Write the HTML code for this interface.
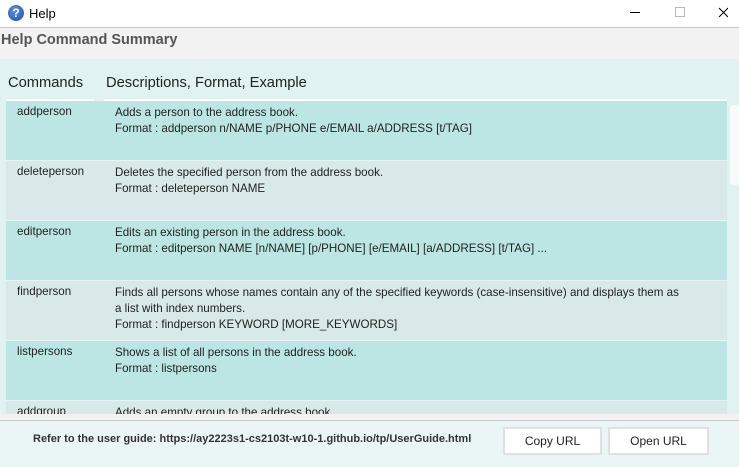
<!DOCTYPE html>
<html><head><style>
*{margin:0;padding:0;box-sizing:border-box}
body{width:739px;height:461px;overflow:hidden;background:#f2f2f2;font-family:"Liberation Sans",sans-serif;position:relative}
.tb{position:absolute;left:0;top:0;width:739px;height:28px;background:#fff;border-bottom:1px solid #c8c8c8}
.tb .ic{position:absolute;left:8px;top:5px;width:16px;height:16px;border-radius:50%;background:radial-gradient(circle at 40% 35%,#5a8fe0,#1f4fb0);color:#fff;font-weight:bold;font-size:12px;text-align:center;line-height:16px}
.tb .t{position:absolute;left:29px;top:6px;font-size:13px;color:#000}
.h{position:absolute;left:1px;top:32px;font-size:14.5px;color:#555;font-weight:bold}
.panel{position:absolute;left:0;top:59px;width:739px;height:355px;background:#e0f2f1;overflow:hidden}
.hd{position:absolute;top:16px;font-size:14.7px;color:#222}
.ul{position:absolute;top:40px;height:2px;background:#fff}
.row{position:absolute;left:6px;width:721px;height:60px;font-size:11.6px;color:#222;border-bottom:1px solid #e6f4f3}
.row .c{position:absolute;left:11px;top:4px}
.row .d{position:absolute;left:109px;top:4px;line-height:16px;width:590px}
.a{background:#bce6e3}.b{background:#d9e8e8}
.sb{position:absolute;left:730px;top:46px;width:9px;height:80px;background:#f8fbfb;border-radius:3px}
.bot{position:absolute;left:0;top:414px;width:739px;height:47px;background:#eaf5f5;border-top:1px solid #c8c8c8;margin-top:6px}
.bot .txt{position:absolute;left:33px;top:12px;font-size:11px;font-weight:bold;color:#333}
.btn{position:absolute;top:6px;height:28px;background:#fff;border:2px solid #e0e0e0;font-size:12px;color:#222;text-align:center;line-height:24px}
</style></head><body>
<div class="tb"><div class="ic">?</div><div class="t">Help</div>
<svg style="position:absolute;left:628px;top:7px" width="100" height="14"><line x1="2" y1="5.5" x2="12" y2="5.5" stroke="#000"/><rect x="47.5" y="0.5" width="9" height="9" fill="none" stroke="#bbb"/><path d="M91 1L100 10M100 1L91 10" stroke="#000"/></svg></div>
<div class="h">Help Command Summary</div>
<div class="panel">
<div class="hd" style="left:8px">Commands</div>
<div class="hd" style="left:106px">Descriptions, Format, Example</div>
<div class="ul" style="left:6px;width:88px"></div><div class="ul" style="left:104px;width:623px"></div>
<div class="row a" style="top:42px"><div class="c">addperson</div><div class="d">Adds a person to the address book.<br>Format : addperson n/NAME p/PHONE e/EMAIL a/ADDRESS [t/TAG]</div></div>
<div class="row b" style="top:102px"><div class="c">deleteperson</div><div class="d">Deletes the specified person from the address book.<br>Format : deleteperson NAME</div></div>
<div class="row a" style="top:162px"><div class="c">editperson</div><div class="d">Edits an existing person in the address book.<br>Format : editperson NAME [n/NAME] [p/PHONE] [e/EMAIL] [a/ADDRESS] [t/TAG] ...</div></div>
<div class="row b" style="top:222px"><div class="c">findperson</div><div class="d">Finds all persons whose names contain any of the specified keywords (case-insensitive) and displays them as<br>a list with index numbers.<br>Format : findperson KEYWORD [MORE_KEYWORDS]</div></div>
<div class="row a" style="top:282px"><div class="c">listpersons</div><div class="d">Shows a list of all persons in the address book.<br>Format : listpersons</div></div>
<div class="row b" style="top:342px"><div class="c">addgroup</div><div class="d">Adds an empty group to the address book.</div></div>
<div class="sb"></div>
</div>
<div class="bot"><div class="txt">Refer to the user guide: https://ay2223s1-cs2103t-w10-1.github.io/tp/UserGuide.html</div>
<div class="btn" style="left:503px;width:99px">Copy URL</div>
<div class="btn" style="left:608px;width:101px">Open URL</div></div>
</body></html>
